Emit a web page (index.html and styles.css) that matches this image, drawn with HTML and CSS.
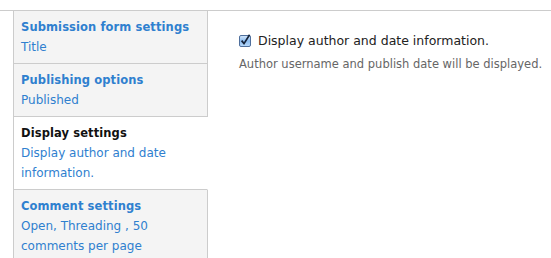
FILE: index.html
```html
<!DOCTYPE html>
<html lang="en">

<head>
    <meta charset="UTF-8">
    <title>Vertical tabs</title>
    <link rel="stylesheet" href="styles.css">
</head>

<body>

    <div class="vertical-tabs">
        <ul class="tabs-list">
            <li class="tab">
                <a href="#" class="tab-title">Submission form settings</a>
                <span class="tab-summary">Title</span>
            </li>
            <li class="tab">
                <a href="#" class="tab-title">Publishing options</a>
                <span class="tab-summary">Published</span>
            </li>
            <li class="tab selected">
                <a href="#" class="tab-title">Display settings</a>
                <span class="tab-summary">Display author and date information.</span>
            </li>
            <li class="tab last">
                <a href="#" class="tab-title">Comment settings</a>
                <span class="tab-summary">Open, Threading , 50 comments per page</span>
            </li>
        </ul>

        <div class="tab-pane">
            <label class="form-item">
                <span class="checkbox">
                    <svg width="13" height="13" viewBox="0 0 13 13">
                        <defs>
                            <linearGradient id="cbfill" x1="0" y1="0" x2="0" y2="1">
                                <stop offset="0" stop-color="#d6e8fb" />
                                <stop offset="0.5" stop-color="#8dbdf0" />
                                <stop offset="1" stop-color="#b9dafb" />
                            </linearGradient>
                        </defs>
                        <rect x="0.5" y="1.5" width="11" height="11" rx="1.5" fill="url(#cbfill)" stroke="#4f6f9c" />
                        <path d="M2.6 6.6 L5 9.6 L10.6 0.8" fill="none" stroke="#15233a" stroke-width="1.7" />
                    </svg>
                </span>
                Display author and date information.
            </label>
            <p class="description">Author username and publish date will be displayed.</p>
        </div>
    </div>

</body>

</html>
```

FILE: styles.css
```css
* {
    margin: 0;
    padding: 0;
    box-sizing: border-box;
}

body {
    font-family: 'DejaVu Sans', 'Verdana', sans-serif;
    background: #fff;
    color: #222;
    width: 551px;
    height: 258px;
    overflow: hidden;
}

.vertical-tabs {
    margin-top: 10px;
    border-top: 1px solid #ccc;
    display: flex;
    height: 248px;
    overflow: hidden;
}

.tabs-list {
    list-style: none;
    width: 195px;
    margin-left: 13px;
    flex-shrink: 0;
    display: flex;
    flex-direction: column;
}

.tab {
    background: #f4f4f4;
    border-left: 1px solid #ccc;
    border-right: 1px solid #ccc;
    border-bottom: 1px solid #ccc;
    padding: 6px 8px 6px 7px;
    font-size: 12px;
    line-height: 20px;
}

.tab.selected {
    background: #fff;
    border-right-color: #fff;
}

.tab.last {
    border-bottom: none;
    flex: 1;
}

.tab-title {
    display: block;
    font-weight: bold;
    font-size: 11.5px;
    color: #2f80cf;
    text-decoration: none;
    letter-spacing: 0.1px;
}

.tab.selected .tab-title {
    color: #111;
}

.tab-summary {
    display: block;
    color: #2f80cf;
}

.tab-pane {
    padding: 22px 0 0 31px;
}

.form-item {
    display: flex;
    align-items: center;
    gap: 6px;
    font-size: 12.5px;
    color: #222;
}

.checkbox {
    display: flex;
    width: 13px;
    height: 13px;
}

.description {
    margin-top: 9px;
    font-size: 11.5px;
    color: #666;
}
```
